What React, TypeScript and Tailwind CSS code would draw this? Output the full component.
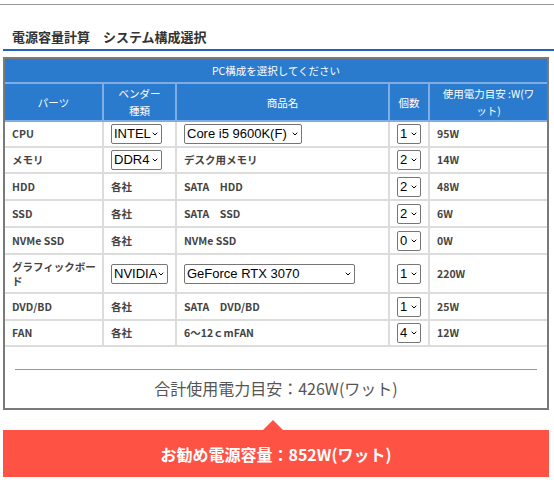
import { ChevronDown } from 'lucide-react';

type Cell = string | { select: string; w: number };

interface Row {
  part: string;
  vendor: Cell;
  product: Cell;
  count: string;
  watt: string;
  h: string;
}

const rows: Row[] = [
  { part: 'CPU', vendor: { select: 'INTEL', w: 51 }, product: { select: 'Core i5 9600K(F)', w: 118 }, count: '1', watt: '95W', h: 'h-[26px]' },
  { part: 'メモリ', vendor: { select: 'DDR4', w: 51 }, product: 'デスク用メモリ', count: '2', watt: '14W', h: 'h-[26px]' },
  { part: 'HDD', vendor: '各社', product: 'SATA　HDD', count: '2', watt: '48W', h: 'h-[27px]' },
  { part: 'SSD', vendor: '各社', product: 'SATA　SSD', count: '2', watt: '6W', h: 'h-[27px]' },
  { part: 'NVMe SSD', vendor: '各社', product: 'NVMe SSD', count: '0', watt: '0W', h: 'h-[27px]' },
  { part: 'グラフィックボード', vendor: { select: 'NVIDIA', w: 57 }, product: { select: 'GeForce RTX 3070', w: 171 }, count: '1', watt: '220W', h: 'h-[39px]' },
  { part: 'DVD/BD', vendor: '各社', product: 'SATA　DVD/BD', count: '1', watt: '25W', h: 'h-[27px]' },
  { part: 'FAN', vendor: '各社', product: '6～12ｃmFAN', count: '4', watt: '12W', h: 'h-[26px]' },
];

function Select({ value, width }: { value: string; width: number }) {
  return (
    <span className="relative inline-flex align-middle" style={{ width }}>
      <select
        defaultValue={value}
        className="h-[20px] w-full appearance-none rounded-[2px] border border-[#767676] bg-white pl-[2px] pr-[10px] font-['Liberation_Sans',Arial,sans-serif] text-[13px] font-normal leading-[18px] text-black"
      >
        <option>{value}</option>
      </select>
      <ChevronDown className="pointer-events-none absolute right-[3px] top-[6px] h-[8px] w-[8px] text-black" strokeWidth={3} />
    </span>
  );
}

function Content({ cell }: { cell: Cell }) {
  if (typeof cell === 'string') return <>{cell}</>;
  return <Select value={cell.select} width={cell.w} />;
}

export default function App() {
  const td = "border-2 border-[#dcdcdc] px-[7px] py-0 text-left first:border-l-0 first:pr-[2px] last:border-r-0";
  const th = "border-2 border-[#7eaee4] px-[6px] py-0 text-center font-normal first:border-l-0 last:border-r-0";

  return (
    <div className="w-[554px] bg-white font-['Noto_Sans_CJK_JP',sans-serif] text-[#444]">
      <div className="pt-[4px]">
        <div className="border-t border-[#999]" />
      </div>

      <h2 className="ml-[3px] border-b-2 border-[#2462bf] pb-[2px] pl-[9px] pt-[22px] text-[13px] font-bold leading-[20px] text-[#333]">
        電源容量計算　システム構成選択
      </h2>

      <div className="mx-[3px] mt-[6px] w-[546px] border-2 border-[#7a7a7a]">
        <table className="w-full table-fixed border-collapse text-[10.5px]">
          <colgroup>
            <col className="w-[98px]" />
            <col className="w-[73px]" />
            <col className="w-[213px]" />
            <col className="w-[40px]" />
            <col className="w-[118px]" />
          </colgroup>
          <thead className="bg-[#2a7bce] text-white">
            <tr className="h-[24px]">
              <th colSpan={5} className="border-b-2 border-[#7eaee4] py-0 text-center text-[10.5px] font-normal">
                PC構成を選択してください
              </th>
            </tr>
            <tr className="h-[38px] leading-[17px]">
              <th className={th}>パーツ</th>
              <th className={th}>
                ベンダー
                <br />
                種類
              </th>
              <th className={th}>商品名</th>
              <th className={th}>個数</th>
              <th className={th + ' px-[8px]'}>使用電力目安 :W(ワット)</th>
            </tr>
          </thead>
          <tbody className="font-bold leading-[14px]">
            {rows.map((r) => (
              <tr key={r.part} className={r.h}>
                <td className={td}>{r.part}</td>
                <td className={td}>
                  <Content cell={r.vendor} />
                </td>
                <td className={td}>
                  <Content cell={r.product} />
                </td>
                <td className={td}>
                  <Select value={r.count} width={24} />
                </td>
                <td className={td}>{r.watt}</td>
              </tr>
            ))}
          </tbody>
        </table>

        <div className="px-[10px] pt-[22px]">
          <div className="border-t border-[#999]" />
        </div>
        <p className="pb-[8px] pt-[6px] text-center text-[16px] leading-[24px] text-[#555]">
          合計使用電力目安：426W(ワット)
        </p>
      </div>

      <div className="relative mx-[3px] mt-[20px] flex h-[47px] w-[546px] items-center justify-center bg-[#fe5344] text-[16px] font-bold text-white">
        <span className="absolute -top-[10px] left-[260px] h-0 w-0 border-x-[10px] border-b-[10px] border-x-transparent border-b-[#fe5344]" />
        お勧め電源容量：852W(ワット)
      </div>
    </div>
  );
}
